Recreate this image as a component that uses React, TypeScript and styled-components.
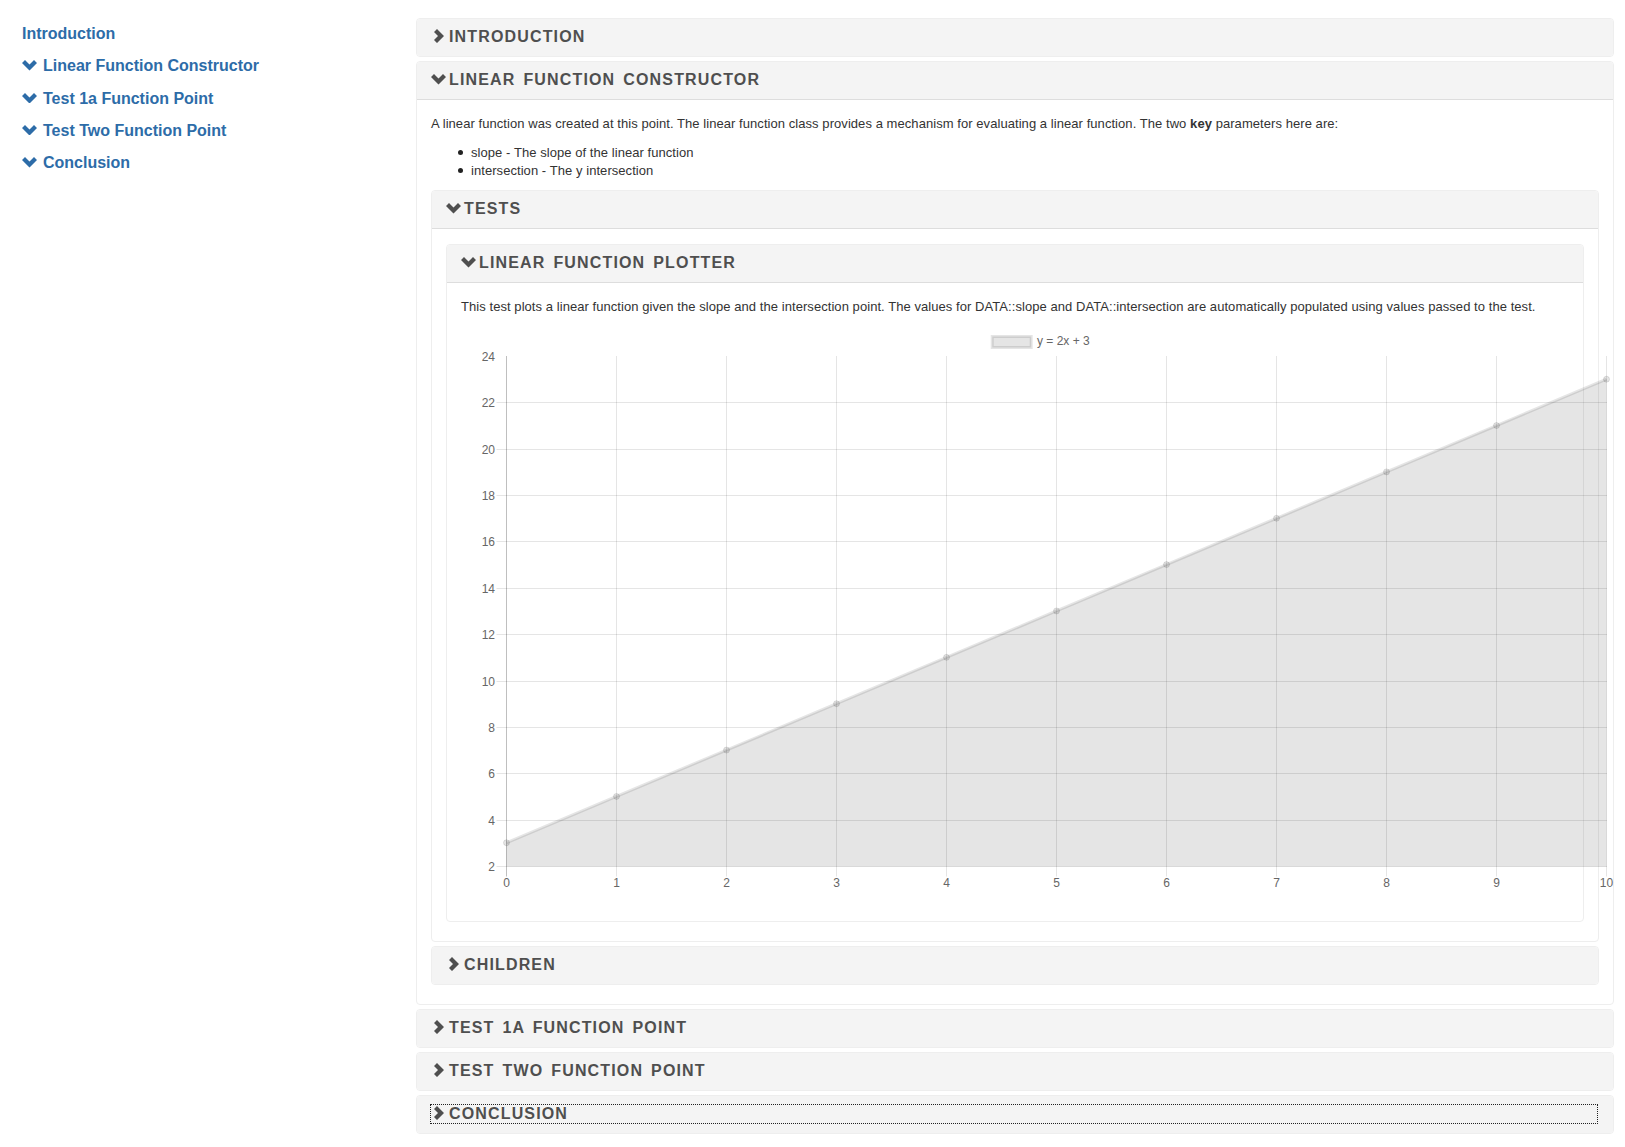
import React from 'react';
import styled, { createGlobalStyle } from 'styled-components';

const GlobalStyle = createGlobalStyle`
  *, *::before, *::after { box-sizing: border-box; }
  html, body { margin: 0; padding: 0; background: #ffffff; }
  body {
    font-family: "Liberation Sans", Arial, Helvetica, sans-serif;
    color: #333333;
    font-size: 13px;
  }
`;

const Page = styled.div`
  display: flex;
  align-items: flex-start;
`;

const Sidebar = styled.nav`
  width: 416px;
  flex: none;
  padding: 23px 0 0 22px;
  display: flex;
  flex-direction: column;
  gap: 10.3px;
`;

const NavItem = styled.a`
  display: flex;
  align-items: flex-start;
  font-size: 16px;
  line-height: 22px;
  font-weight: bold;
  color: #2d6ca8;
  text-decoration: none;
`;

const NavIcon = styled.span`
  display: flex;
  flex: none;
  width: 21px;
  padding-top: 5px;
  color: #2d6ca8;
`;

const Main = styled.main`
  flex: 1;
  min-width: 0;
  padding: 18px 11px 0 0;
`;

const PanelBox = styled.section`
  border: 1px solid #eeeeee;
  border-radius: 4px;
  background: #ffffff;
  margin-bottom: 4px;
`;

const PanelHeading = styled.div<{ $open: boolean }>`
  background: #f4f4f4;
  padding: 9px 14px 10px;
  border-bottom: ${(p) => (p.$open ? '1px solid #dddddd' : 'none')};
  border-radius: ${(p) => (p.$open ? '3px 3px 0 0' : '3px')};
`;

const PanelTitle = styled.a<{ $focused?: boolean }>`
  display: flex;
  align-items: flex-start;
  margin-right: ${(p) => (p.$focused ? 2 : 0)}px;
  font-size: 16px;
  line-height: 18px;
  font-weight: bold;
  letter-spacing: 1.15px;
  word-spacing: 2.4px;
  text-transform: uppercase;
  color: #4f4f4f;
  text-decoration: none;
  outline: ${(p) => (p.$focused ? '1px dotted #222222' : 'none')};
  outline-offset: 0;
`;

const IconSlot = styled.span<{ $open: boolean }>`
  display: flex;
  flex: none;
  width: 18px;
  padding-left: ${(p) => (p.$open ? 0 : 3)}px;
  padding-top: ${(p) => (p.$open ? 3 : 1)}px;
  color: #4f4f4f;
`;

const PanelBody = styled.div`
  padding: 15px 14px;
`;

const Paragraph = styled.p`
  margin: 0 0 11px;
  font-size: 13px;
  line-height: 18px;
  letter-spacing: 0.06px;
  color: #333333;
`;

const BulletList = styled.ul`
  margin: 0 0 10px;
  padding-left: 40px;
  list-style: none;
  font-size: 13px;
  line-height: 18px;
  letter-spacing: 0.06px;
  color: #333333;
`;

const BulletItem = styled.li`
  &::before {
    content: '';
    display: inline-block;
    width: 5px;
    height: 5px;
    margin: 0 8px 0 -13px;
    border-radius: 50%;
    background: #222222;
    vertical-align: 2px;
  }
`;

const ChartSvg = styled.svg`
  display: block;
  width: 1155px;
  height: 579px;
  overflow: visible;
  font-family: "Liberation Sans", Arial, Helvetica, sans-serif;
`;

const ChevronDown = () => (
  <svg width="15" height="10.5" viewBox="0 0 15 10.5" aria-hidden="true">
    <path d="M0 3 L3 0 L7.5 4.5 L12 0 L15 3 L7.5 10.5 Z" fill="currentColor" />
  </svg>
);

const ChevronRight = () => (
  <svg width="11" height="14" viewBox="0 0 11 14" aria-hidden="true">
    <path d="M3 0 L10 7 L3 14 L0 11 L4 7 L0 3 Z" fill="currentColor" />
  </svg>
);

type PanelProps = {
  title: string;
  open?: boolean;
  focused?: boolean;
  children?: React.ReactNode;
};

const Panel = ({ title, open = false, focused = false, children }: PanelProps) => (
  <PanelBox>
    <PanelHeading $open={open}>
      <PanelTitle href="#" $focused={focused}>
        <IconSlot $open={open}>{open ? <ChevronDown /> : <ChevronRight />}</IconSlot>
        <span>{title}</span>
      </PanelTitle>
    </PanelHeading>
    {open && <PanelBody>{children}</PanelBody>}
  </PanelBox>
);

const GRID = 'rgba(0,0,0,0.1)';
const ZERO = 'rgba(0,0,0,0.25)';
const SERIES = 'rgba(0,0,0,0.1)';

const xTicks = Array.from({ length: 11 }, (_, i) => i);
const yTicks = Array.from({ length: 12 }, (_, i) => 2 + i * 2);
const X = (v: number) => 45.5 + v * 110;
const Y = (v: number) => 29 + (24 - v) * 23.18;
const gx = (v: number) => Math.round(X(v) - 0.5) + 0.5;
const gy = (v: number) => Math.round(Y(v)) + 0.5;

const LinearChart = () => {
  const pts = xTicks.map((x) => [X(x), Y(2 * x + 3)] as const);
  const line = pts.map(([a, b]) => `${a},${b}`).join(' ');
  const top = 29;
  const bottom = gy(2);
  const area = `${line} ${X(10)},${bottom} ${X(0)},${bottom}`;
  return (
    <ChartSvg viewBox="0 0 1155 579">
      <rect x="531.2" y="9.5" width="39" height="11" fill={SERIES} stroke={SERIES} strokeWidth="3" />
      <text x="576" y="18.3" fontSize="12" fill="#666666">y = 2x + 3</text>
      {yTicks.filter((v) => v < 24).map((v) => (
        <line key={`h${v}`} x1={gx(0) - 10} x2={gx(10) + 0.5} y1={gy(v)} y2={gy(v)} stroke={GRID} strokeWidth="1" />
      ))}
      {xTicks.map((v) => (
        <line key={`v${v}`} x1={gx(v)} x2={gx(v)} y1={top} y2={bottom + 10} stroke={v === 0 ? ZERO : GRID} strokeWidth="1" />
      ))}
      {yTicks.map((v) => (
        <text key={`yl${v}`} x="34" y={gy(v) + 4} fontSize="12" fill="#666666" textAnchor="end">{v}</text>
      ))}
      {xTicks.map((v) => (
        <text key={`xl${v}`} x={gx(v)} y={bottom + 20} fontSize="12" fill="#666666" textAnchor="middle">{v}</text>
      ))}
      <polygon points={area} fill={SERIES} />
      <polyline points={line} fill="none" stroke={SERIES} strokeWidth="3" strokeLinejoin="round" />
      {pts.map(([a, b], i) => (
        <circle key={`p${i}`} cx={a} cy={b} r="3" fill={SERIES} stroke={SERIES} strokeWidth="1" />
      ))}
    </ChartSvg>
  );
};

const navItems = [
  { label: 'Introduction', chevron: false },
  { label: 'Linear Function Constructor', chevron: true },
  { label: 'Test 1a Function Point', chevron: true },
  { label: 'Test Two Function Point', chevron: true },
  { label: 'Conclusion', chevron: true },
];

export default function App() {
  return (
    <>
      <GlobalStyle />
      <Page>
        <Sidebar>
          {navItems.map((item) => (
            <NavItem href="#" key={item.label}>
              {item.chevron && (
                <NavIcon>
                  <ChevronDown />
                </NavIcon>
              )}
              <span>{item.label}</span>
            </NavItem>
          ))}
        </Sidebar>
        <Main>
          <Panel title="Introduction" />
          <Panel title="Linear Function Constructor" open>
            <Paragraph>
              A linear function was created at this point. The linear function class provides a mechanism for
              evaluating a linear function. The two <b>key</b> parameters here are:
            </Paragraph>
            <BulletList>
              <BulletItem>slope - The slope of the linear function</BulletItem>
              <BulletItem>intersection - The y intersection</BulletItem>
            </BulletList>
            <Panel title="Tests" open>
              <Panel title="Linear Function Plotter" open>
                <Paragraph>
                  This test plots a linear function given the slope and the intersection point. The values for
                  DATA::slope and DATA::intersection are automatically populated using values passed to the test.
                </Paragraph>
                <LinearChart />
              </Panel>
            </Panel>
            <Panel title="Children" />
          </Panel>
          <Panel title="Test 1a Function Point" />
          <Panel title="Test Two Function Point" />
          <Panel title="Conclusion" focused />
        </Main>
      </Page>
    </>
  );
}
